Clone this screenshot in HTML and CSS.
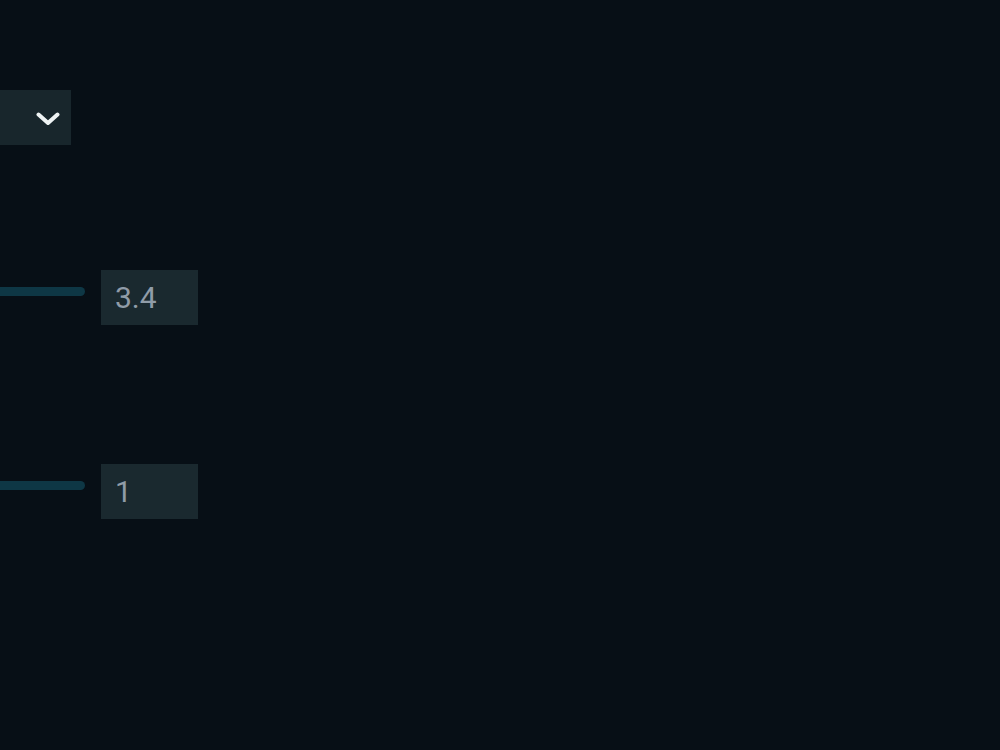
FILE: index.html
```html
<!DOCTYPE html>
<html>
<head>
<meta charset="utf-8">
<link rel="stylesheet" href="styles.css">
</head>
<body>
<div class="panel">
  <div class="select">
    <svg class="chev" width="24" height="14" viewBox="0 0 24 14"><path d="M2.5 2.5 L12 11 L21.5 2.5" fill="none" stroke="#eef3f4" stroke-width="4" stroke-linecap="round" stroke-linejoin="round"/></svg>
  </div>
  <div class="row row-first">
    <div class="track"></div>
    <div class="num">3.4</div>
  </div>
  <div class="row row-second">
    <div class="track"></div>
    <div class="num">1</div>
  </div>
</div>
</body>
</html>
```
FILE: styles.css
```css
html, body {
  margin: 0;
  padding: 0;
  height: 100%;
  background: #070f16;
  overflow: hidden;
}
body {
  font-family: Roboto, "Liberation Sans", sans-serif;
}
.panel {
  margin-left: -200px;
  padding-top: 90px;
  display: flex;
  flex-direction: column;
}
.select {
  width: 271px;
  height: 55px;
  background: #18262c;
  display: flex;
  align-items: center;
  justify-content: flex-end;
  padding-right: 11px;
  box-sizing: border-box;
}
.chev {
  display: block;
  margin-top: 2px;
}
.row {
  display: flex;
  align-items: flex-start;
  gap: 16px;
}
.row-first { margin-top: 125px; }
.row-second { margin-top: 139px; }
.track {
  width: 285px;
  height: 9px;
  margin-top: 17px;
  background: #0e3745;
  border-radius: 5px;
}
.num {
  width: 97px;
  height: 55px;
  background: #1a292f;
  color: #909ca8;
  font-size: 30px;
  line-height: 55px;
  padding-left: 14px;
  box-sizing: border-box;
}
```
